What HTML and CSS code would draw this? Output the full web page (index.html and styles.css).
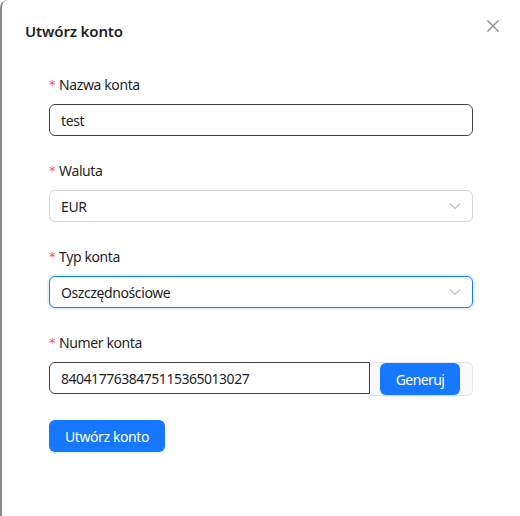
FILE: index.html
```html
<!DOCTYPE html>
<html lang="pl">
<head>
<meta charset="utf-8">
<title>Utwórz konto</title>
<link rel="stylesheet" href="styles.css">
</head>
<body>
<div class="modal">
  <div class="modal-header">
    <h2 class="modal-title">Utwórz konto</h2>
    <button class="close" aria-label="Zamknij">
      <svg width="12" height="12" viewBox="0 0 12 12"><path d="M0.5 0.5 L11.5 11.5 M11.5 0.5 L0.5 11.5" stroke="#8c8c8c" stroke-width="1.4" fill="none"/></svg>
    </button>
  </div>
  <form class="form">
    <div class="field">
      <label class="label"><span class="req">*</span>Nazwa konta</label>
      <div class="input dark"><span>test</span></div>
    </div>
    <div class="field">
      <label class="label"><span class="req">*</span>Waluta</label>
      <div class="input select"><span>EUR</span>
        <svg class="chev" width="12" height="8" viewBox="0 0 12 8"><path d="M1 1.5 L6 6.5 L11 1.5" stroke="#bfbfbf" stroke-width="1.2" fill="none"/></svg>
      </div>
    </div>
    <div class="field">
      <label class="label"><span class="req">*</span>Typ konta</label>
      <div class="input select focus"><span>Oszczędnościowe</span>
        <svg class="chev" width="12" height="8" viewBox="0 0 12 8"><path d="M1 1.5 L6 6.5 L11 1.5" stroke="#bfbfbf" stroke-width="1.2" fill="none"/></svg>
      </div>
    </div>
    <div class="field">
      <label class="label"><span class="req">*</span>Numer konta</label>
      <div class="group">
        <div class="input dark left"><span class="num">8404177638475115365013027</span></div>
        <div class="addon"><button type="button" class="btn small">Generuj</button></div>
      </div>
    </div>
    <button type="button" class="btn submit">Utwórz konto</button>
  </form>
</div>
</body>
</html>
```
FILE: styles.css
```css
html, body {
  margin: 0;
  padding: 0;
  background: #ffffff;
  overflow: hidden;
}
body {
  font-family: "Noto Sans", "Open Sans", sans-serif;
  color: rgba(0,0,0,0.88);
  width: 520px;
  height: 516px;
  letter-spacing: -0.4px;
}
.modal {
  box-sizing: border-box;
  width: 520px;
  height: 516px;
  border-left: 2px solid #8a8a8a;
  border-top-left-radius: 8px;
  background: #fff;
  padding: 0 0 0 23px;
}
.modal-header {
  display: flex;
  align-items: flex-start;
  justify-content: space-between;
  width: 474px;
  padding-top: 19px;
}
.modal-title {
  margin: 0;
  font-size: 15px;
  font-weight: 600;
  line-height: 24px;
  color: #1f1f1f;
  letter-spacing: -0.15px;
}
.close {
  border: 0;
  background: none;
  padding: 0;
  margin-top: 1px;
  width: 12px;
  height: 12px;
  display: block;
}
.close svg { display: block; }
.form {
  padding-top: 31px;
  padding-left: 24px;
  width: 424px;
  display: flex;
  flex-direction: column;
  align-items: flex-start;
}
.field {
  width: 424px;
  margin-bottom: 24px;
}
.label {
  display: flex;
  align-items: center;
  height: 22px;
  font-size: 14px;
  line-height: 22px;
  padding-bottom: 8px;
  color: #1f1f1f;
}
.req {
  color: #ff4d4f;
  margin-right: 4px;
  font-family: "DejaVu Sans", sans-serif;
  font-size: 13px;
  line-height: 22px;
}
.input {
  box-sizing: border-box;
  height: 32px;
  border: 1px solid #d9d9d9;
  border-radius: 6px;
  padding: 0 11px;
  display: flex;
  align-items: center;
  font-size: 14px;
  color: #1f1f1f;
  background: #fff;
}
.input.dark { border-color: #424242; }
.select { justify-content: space-between; }
.input.focus {
  border-color: #1677ff;
  box-shadow: 0 0 0 2px rgba(5,145,255,0.1);
}
.group {
  display: flex;
  width: 424px;
}
.input.left {
  flex: 1;
  border-radius: 6px 0 0 6px;
}
.num {
  font-size: 14px;
  letter-spacing: -0.48px;
}
.addon {
  box-sizing: border-box;
  width: 103px;
  height: 34px;
  background: #fafafa;
  border: 1px solid #e6e6e6;
  border-left: 0;
  border-radius: 0 6px 6px 0;
  display: flex;
  align-items: center;
  justify-content: center;
  padding-right: 2px;
}
.btn {
  border: 0;
  background: #1677ff;
  color: #fff;
  font-family: "Noto Sans", "Open Sans", sans-serif;
  font-size: 14px;
  letter-spacing: -0.4px;
  border-radius: 6px;
  height: 32px;
  padding: 0;
  box-shadow: 0 2px 0 rgba(5,145,255,0.1);
}
.btn.small {
  width: 80px;
  letter-spacing: -0.6px;
}
.btn.submit {
  width: 116px;
}
```
